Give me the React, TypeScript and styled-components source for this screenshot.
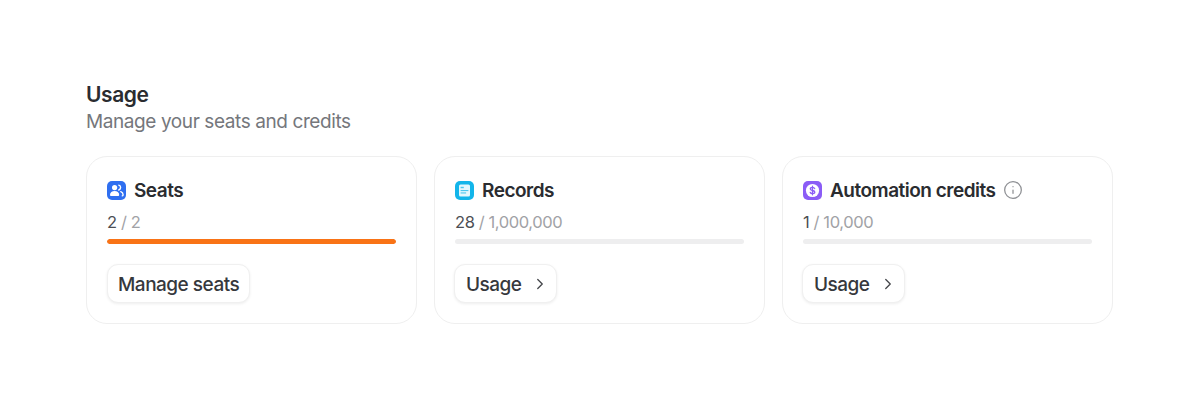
import styled, { createGlobalStyle } from "styled-components";
import { ChevronRight, Info } from "lucide-react";

const GlobalStyle = createGlobalStyle`
  html, body {
    margin: 0;
    background: #fff;
    font-family: Inter, "Noto Sans", sans-serif;
  }
`;
const Page = styled.main`
  padding: 81px 87px 0 86px;
`;
const Title = styled.h1`
  margin: 0;
  font-size: 21px;
  line-height: 28px;
  font-weight: 600;
  letter-spacing: -0.4px;
  color: #2a2c30;
`;
const Subtitle = styled.p`
  margin: 0;
  font-size: 19px;
  line-height: 26px;
  letter-spacing: -0.41px;
  color: #75777c;
`;
const Cards = styled.section`
  display: grid;
  grid-template-columns: repeat(3, 331px);
  gap: 17px;
  margin-top: 21px;
`;
const Card = styled.article`
  box-sizing: border-box;
  height: 168px;
  padding: 22px 20px 0 20px;
  border: 1px solid #efefef;
  border-radius: 21px;
`;
const CardHead = styled.div`
  display: flex;
  align-items: flex-start;
  gap: 8px;
  height: 24px;
`;
const CardName = styled.h2`
  margin: 0;
  font-size: 19px;
  line-height: 24px;
  font-weight: 600;
  letter-spacing: -0.5px;
  color: #2a2c30;
`;
const Count = styled.div`
  margin-top: 8px;
  font-size: 16.5px;
  line-height: 22px;
  letter-spacing: -0.4px;
  color: #a1a2a6;
`;
const Used = styled.span`
  color: #4c4e53;
`;
const Track = styled.div`
  height: 5px;
  margin-top: 6px;
  border-radius: 3px;
  background: #eeeeef;
  overflow: hidden;
`;
const Fill = styled.div`
  height: 100%;
  border-radius: 3px;
  background: #f97316;
`;
const Button = styled.button<{ $withIcon?: boolean }>`
  display: inline-flex;
  align-items: center;
  gap: 9px;
  box-sizing: border-box;
  height: 39px;
  margin-top: 20px;
  margin-left: ${(p) => (p.$withIcon ? "-1px" : "0")};
  padding: 1px ${(p) => (p.$withIcon ? "11px" : "10px")} 0;
  border: 1px solid #f0f0f0;
  border-radius: 11px;
  background: #fff;
  box-shadow: 0 1px 3px rgba(0, 0, 0, 0.07);
  font-family: inherit;
  font-size: 19px;
  font-weight: 500;
  letter-spacing: -0.5px;
  color: #36383c;
`;
const IconBox = styled.svg`
  flex: none;
  display: block;
  margin-top: 2px;
`;

function SeatsIcon() {
  return (
    <IconBox width="19" height="19" viewBox="0 0 19 19">
      <rect width="19" height="19" rx="5" fill="#2f6ff0" />
      <circle cx="7.6" cy="6.6" r="2.6" fill="#fff" />
      <path d="M3 14c0-2.5 2-4 4.6-4s4.6 1.500 4.600 4c0 .6-.4.9-.9.9H3.900c-.5 0-.9-.3-.9-.9z" fill="#fff" />
      <path d="M11.800 4.200a2.500 2.500 0 0 1 0 4.800M13.800 10.600c1.400.5 2.300 1.700 2.300 3.200 0 .6-.3 1-.8 1.100" fill="none" stroke="#fff" strokeWidth="1.400" strokeLinecap="round" />
    </IconBox>
  );
}

function RecordsIcon() {
  return (
    <IconBox width="19" height="19" viewBox="0 0 19 19">
      <rect width="19" height="19" rx="5" fill="#13b5ea" />
      <rect x="4" y="3.500" width="11" height="12" rx="1.500" fill="#e4f7fd" />
      <rect x="5.600" y="5.800" width="3.200" height="1.400" fill="#4cc7ef" />
      <rect x="5.600" y="9" width="7.800" height="1.100" fill="#4cc7ef" />
      <rect x="5.600" y="11.400" width="5.500" height="1.100" fill="#4cc7ef" />
    </IconBox>
  );
}

function CreditsIcon() {
  return (
    <IconBox width="19" height="19" viewBox="0 0 19 19">
      <rect width="19" height="19" rx="5" fill="#8b5cf6" />
      <circle cx="9.500" cy="9.500" r="6.600" fill="#fff" />
      <path d="M11.700 7.600c-.3-.9-1.200-1.300-2.200-1.300-1.200 0-2.200.6-2.200 1.600 0 2.200 4.500 1 4.500 3.200 0 1-1 1.600-2.300 1.600-1.100 0-2-.5-2.300-1.400M9.500 5.200v8.600" fill="none" stroke="#8b5cf6" strokeWidth="1.300" strokeLinecap="round" />
    </IconBox>
  );
}

const InfoIcon = styled(Info)`
  flex: none;
  margin-top: 1px;
  color: #8d8f93;
`;
const Chevron = styled(ChevronRight)`
  margin-right: -4px;
  color: #44464a;
`;

export default function App() {
  return (
    <Page>
      <GlobalStyle />
      <Title>Usage</Title>
      <Subtitle>Manage your seats and credits</Subtitle>
      <Cards>
        <Card>
          <CardHead>
            <SeatsIcon />
            <CardName>Seats</CardName>
          </CardHead>
          <Count>
            <Used>2</Used> / 2
          </Count>
          <Track>
            <Fill style={{ width: "100%" }} />
          </Track>
          <Button>Manage seats</Button>
        </Card>
        <Card>
          <CardHead>
            <RecordsIcon />
            <CardName>Records</CardName>
          </CardHead>
          <Count>
            <Used>28</Used> / 1,000,000
          </Count>
          <Track />
          <Button $withIcon>
            Usage
            <Chevron size={18} strokeWidth={1.75} />
          </Button>
        </Card>
        <Card>
          <CardHead>
            <CreditsIcon />
            <CardName>Automation credits</CardName>
            <InfoIcon size={20} strokeWidth={1.5} />
          </CardHead>
          <Count>
            <Used>1</Used> / 10,000
          </Count>
          <Track />
          <Button $withIcon>
            Usage
            <Chevron size={18} strokeWidth={1.75} />
          </Button>
        </Card>
      </Cards>
    </Page>
  );
}
